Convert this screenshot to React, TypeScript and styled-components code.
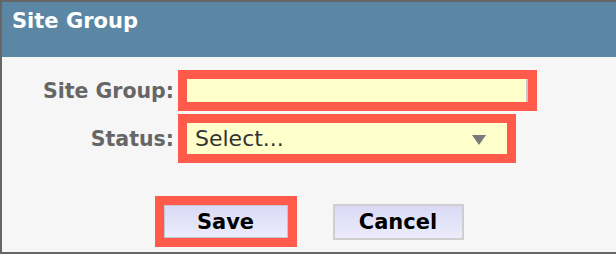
import styled, { createGlobalStyle } from 'styled-components'

const GlobalStyle = createGlobalStyle`
  html, body {
    margin: 0;
    padding: 0;
    background: #f6f6f6;
  }
  * {
    box-sizing: border-box;
  }
`

const Dialog = styled.div`
  width: 616px;
  height: 254px;
  border-top: 2px solid #666;
  border-left: 2px solid #666;
  border-bottom: 2px solid #666;
  background: #f6f6f6;
  font-family: 'DejaVu Sans', Verdana, sans-serif;
  display: flex;
  flex-direction: column;
`

const Header = styled.div`
  height: 55px;
  background: #5b87a5;
  padding: 7px 0 0 10px;
`

const Title = styled.h2`
  margin: 0;
  font-size: 21px;
  line-height: 24px;
  font-weight: bold;
  color: #fff;
`

const Body = styled.div`
  flex: 1;
  padding-top: 13px;
  display: flex;
  flex-direction: column;
`

const Row = styled.div`
  display: flex;
  align-items: center;
  gap: 4px;
  & + & {
    margin-top: 3px;
  }
`

const Label = styled.label`
  width: 172px;
  text-align: right;
  font-size: 20.5px;
  font-weight: bold;
  color: #666;
`

const Highlight = styled.div`
  border: 9px solid #ff5a4a;
  display: flex;
`

const TextInput = styled.input`
  width: 341px;
  height: 23px;
  border: none;
  border-right: 2px solid #c8c8c8;
  background: #ffffcc;
  outline: none;
  padding: 0 6px;
  font: inherit;
`

const SelectBox = styled.div`
  width: 320px;
  height: 31px;
  background: #ffffcc;
  display: flex;
  align-items: center;
  justify-content: space-between;
  padding: 0 21px 0 8px;
  font-size: 22px;
  color: #333;
`

const Caret = styled.span`
  width: 0;
  height: 0;
  border-left: 7px solid transparent;
  border-right: 7px solid transparent;
  border-top: 10px solid #7a7a7a;
  margin-top: 2px;
`

const Actions = styled.div`
  margin-top: 33px;
  display: flex;
  justify-content: center;
  align-items: center;
  gap: 36px;
`

const Button = styled.button<{ $w: number; $h: number; $border: string }>`
  width: ${p => p.$w}px;
  height: ${p => p.$h}px;
  border: ${p => p.$border};
  background: linear-gradient(#dadaf5, #ececfc);
  font-family: inherit;
  font-size: 21px;
  font-weight: bold;
  color: #000;
  padding: 0;
  cursor: pointer;
`

export default function App() {
  return (
    <>
      <GlobalStyle />
      <Dialog>
        <Header>
          <Title>Site Group</Title>
        </Header>
        <Body>
          <Row>
            <Label>Site Group:</Label>
            <Highlight>
              <TextInput type="text" />
            </Highlight>
          </Row>
          <Row>
            <Label>Status:</Label>
            <Highlight>
              <SelectBox>
                <span>Select...</span>
                <Caret />
              </SelectBox>
            </Highlight>
          </Row>
          <Actions>
            <Highlight>
              <Button $w={124} $h={33} $border="1px solid #c4c4d4">Save</Button>
            </Highlight>
            <Button $w={131} $h={36} $border="2px solid #cfcfcf">Cancel</Button>
          </Actions>
        </Body>
      </Dialog>
    </>
  )
}
